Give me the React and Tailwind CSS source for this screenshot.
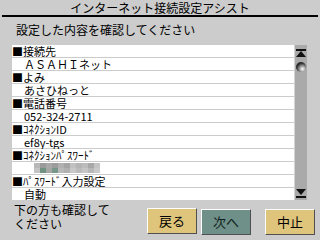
import React from 'react';

const rows = [
  { label: true, text: '■接続先' },
  { text: 'ＡＳＡＨＩネット' },
  { label: true, text: '■よみ' },
  { text: 'あさひねっと' },
  { label: true, text: '■電話番号' },
  { text: '052-324-2711' },
  { label: true, text: '■ｺﾈｸｼｮﾝID' },
  { text: 'ef8y-tgs' },
  { label: true, text: '■ｺﾈｸｼｮﾝﾊﾟｽﾜｰﾄﾞ' },
  { blur: true },
  { label: true, text: '■ﾊﾟｽﾜｰﾄﾞ入力設定' },
  { text: '自動' },
];

// mosaic that hides the password
const mosaic = [
  ['#b8b8b8', '#9a9a9a', '#a8a8a8', '#9c9c9c', '#b0b0b0', '#a4a4a4', '#c0c0c0', '#b4b4b4', '#bcbcbc', '#a8a8a8', '#c4c4c4'],
  ['#c4c4c4', '#6f9282', '#a6a6a6', '#76988a', '#b8b8b8', '#b0b0b0', '#c8c8c8', '#bcbcbc', '#c6c6c6', '#b8b8b8', '#cacaca'],
];

function Mosaic() {
  return (
    <svg width="66" height="10" className="ml-[10px]">
      {mosaic.map((r, y) =>
        r.map((c, x) => <rect key={`${x}-${y}`} x={x * 6} y={y * 5} width="6" height="5" fill={c} />)
      )}
    </svg>
  );
}

function ScrollBar() {
  return (
    <div className="w-[13px] h-[155px] bg-[#aaaaaa] border-l border-[#d4d4d4] flex flex-col items-center justify-between pt-[4px] pb-[2px]">
      <div className="flex flex-col items-center gap-[5px]">
        <svg width="10" height="8" viewBox="0 0 10 8">
          <rect x="0" y="0" width="10" height="2" fill="#111" />
          <polygon points="5,2 10,8 0,8" fill="#111" />
        </svg>
        <svg width="10" height="10" viewBox="0 0 10 10">
          <defs>
            <radialGradient id="ball" cx="0.65" cy="0.7" r="0.6">
              <stop offset="0" stopColor="#ffffff" />
              <stop offset="0.5" stopColor="#9a9a9a" />
              <stop offset="1" stopColor="#2a2a2a" />
            </radialGradient>
          </defs>
          <circle cx="5" cy="5" r="5" fill="url(#ball)" />
        </svg>
      </div>
      <svg width="10" height="9" viewBox="0 0 10 9">
        <polygon points="0,0 10,0 5,6" fill="#111" />
        <rect x="0" y="7" width="10" height="2" fill="#111" />
      </svg>
    </div>
  );
}

function Btn({ children, teal }) {
  return (
    <button
      className={`h-[26px] w-[50px] border border-t-white border-l-white border-b-[#505050] border-r-[#505050] text-[13px] leading-[24px] ${
        teal ? 'bg-[#6f9088] text-[#102020]' : 'bg-[#dfc47c] text-black'
      }`}
    >
      {children}
    </button>
  );
}

export default function App() {
  return (
    <div className="w-[320px] h-[240px] bg-[#cccccc] overflow-hidden font-['Noto_Sans_CJK_JP',sans-serif] text-black">
      <div className="h-[15px] text-[12px] leading-[16px] text-center">インターネット接続設定アシスト</div>
      <div className="mx-[2px] h-[2px] bg-black" />
      <div className="mt-[6px] pl-[16px] h-[14px] text-[12px] leading-[14px]">設定した内容を確認してください</div>
      <div className="mt-[8px] ml-[12px] flex">
        <div className="w-[282px] flex flex-col gap-[1px]">
          {rows.map((r, i) => (
            <div key={i} className={`h-[12px] bg-white text-[11px] leading-[12px] whitespace-nowrap flex items-center ${r.label ? '' : 'pl-[12px]'}`}>
              {r.blur ? <Mosaic /> : r.text}
            </div>
          ))}
        </div>
        <ScrollBar />
      </div>
      <div className="flex mt-[3px] pl-[14px]">
        <div className="w-[133px] text-[12px] leading-[14px]">
          下の方も確認して
          <br />
          ください
        </div>
        <div className="mt-[5px] flex">
          <Btn>戻る</Btn>
          <div className="ml-[4px]">
            <Btn teal>次へ</Btn>
          </div>
          <div className="ml-[14px]">
            <Btn>中止</Btn>
          </div>
        </div>
      </div>
    </div>
  );
}
